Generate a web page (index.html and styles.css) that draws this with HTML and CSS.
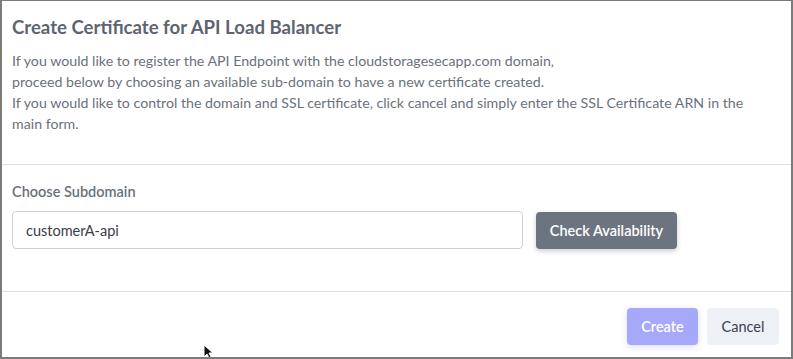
FILE: index.html
```html
<!DOCTYPE html>
<html lang="en">
<head>
  <meta charset="UTF-8" />
  <title>Create Certificate for API Load Balancer</title>
  <link rel="stylesheet" href="styles.css">
</head>
<body>
  <div class="modal">
    <div class="modal-header">
      <h2 class="modal-title">Create Certificate for API Load Balancer</h2>
      <p class="modal-intro">
        If you would like to register the API Endpoint with the cloudstoragesecapp.com domain,<br>
        proceed below by choosing an available sub-domain to have a new certificate created.<br>
        If you would like to control the domain and SSL certificate, click cancel and simply enter the SSL Certificate ARN in the main form.
      </p>
    </div>

    <div class="modal-body">
      <label class="field-label" for="subdomain">Choose Subdomain</label>
      <div class="field-row">
        <input type="text" id="subdomain" class="text-input" value="customerA-api" />
        <button class="btn btn-secondary">Check Availability</button>
      </div>
    </div>

    <div class="modal-footer">
      <button class="btn btn-primary" disabled>Create</button>
      <button class="btn btn-light">Cancel</button>
    </div>

    <!-- mouse pointer captured in the screenshot -->
    <svg class="cursor" width="12" height="16" viewBox="0 0 12 16">
      <path d="M1 1 L1 13 L4 10 L6.5 15 L8.5 14 L6 9 L10 9 Z" fill="#111" stroke="#fff" stroke-width="1"/>
    </svg>
  </div>
</body>
</html>
```

FILE: styles.css
```css
body {
  margin: 0;
  background: #fff;
  font-family: 'Lato', 'Noto Sans', sans-serif;
}

.modal {
  position: relative;
  box-sizing: border-box;
  width: 793px;
  height: 359px;
  border: 2px solid #7b7b7b;
  border-top-width: 1px;
  background: #fff;
  overflow: hidden;
}

.modal-header {
  padding: 14px 22px 30px 10px;
  border-bottom: 1px solid #e1e1e1;
}

.modal-title {
  margin: 0 0 11px;
  font-size: 18.6px;
  line-height: 24px;
  font-weight: 700;
  color: #5d6570;
}

.modal-intro {
  margin: 0;
  font-size: 14.2px;
  line-height: 21px;
  color: #6b717b;
}

.modal-body {
  padding: 16px 10px 42px;
  border-bottom: 1px solid #e1e1e1;
}

.field-label {
  display: block;
  margin-bottom: 9px;
  font-size: 14.5px;
  line-height: 21px;
  font-weight: 600;
  color: #6b717b;
}

.field-row {
  display: flex;
  align-items: center;
  gap: 13px;
}

.text-input {
  box-sizing: border-box;
  width: 511px;
  height: 38px;
  padding: 0 13px;
  border: 1px solid #cdd1d6;
  border-radius: 4px;
  font-family: inherit;
  font-size: 14.5px;
  color: #3b4047;
  background: #fff;
}

.btn {
  box-sizing: border-box;
  height: 37px;
  border: none;
  border-radius: 4px;
  font-family: inherit;
  font-size: 14.5px;
  cursor: pointer;
}

.btn-secondary {
  width: 141px;
  background: #6c757f;
  color: #fff;
  font-weight: 600;
  box-shadow: 0 2px 5px rgba(0, 0, 0, 0.2);
}

.modal-footer {
  display: flex;
  justify-content: flex-end;
  gap: 9px;
  padding: 16px 12px 0;
}

.btn-primary {
  width: 71px;
  background: #a6a9fa;
  color: #fff;
  font-weight: 600;
  box-shadow: 0 2px 6px rgba(120, 124, 245, 0.25);
}

.btn-light {
  width: 72px;
  background: #edf0f5;
  color: #3b4150;
}

.cursor {
  position: absolute;
  left: 201px;
  top: 343px;
}
```
